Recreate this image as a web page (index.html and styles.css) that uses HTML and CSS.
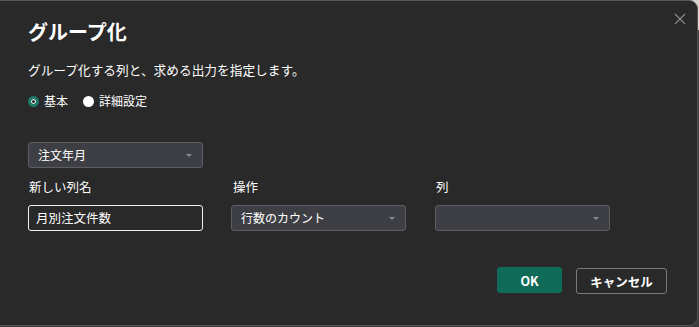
FILE: index.html
```html
<!DOCTYPE html>
<html lang="ja">
<head>
    <meta charset="UTF-8">
    <title>グループ化</title>
    <link rel="stylesheet" href="styles.css">
</head>
<body>
    <div class="dialog">
        <button class="close-btn" aria-label="閉じる">
            <svg width="12" height="12" viewBox="0 0 12 12"><path d="M1 1L11 11M11 1L1 11" stroke="#8a8a8a" stroke-width="1.2" fill="none"/></svg>
        </button>

        <h1 class="title">グループ化</h1>
        <p class="desc">グループ化する列と、求める出力を指定します。</p>

        <div class="radio-row">
            <label class="radio"><span class="dot checked"></span>基本</label>
            <label class="radio"><span class="dot"></span>詳細設定</label>
        </div>

        <div class="select group-col">注文年月<span class="caret"></span></div>

        <div class="fields">
            <div class="field">
                <div class="label">新しい列名</div>
                <div class="text-input">月別注文件数</div>
            </div>
            <div class="field">
                <div class="label">操作</div>
                <div class="select">行数のカウント<span class="caret"></span></div>
            </div>
            <div class="field">
                <div class="label">列</div>
                <div class="select"><span class="caret"></span></div>
            </div>
        </div>

        <div class="actions">
            <button class="btn primary">OK</button>
            <button class="btn secondary">キャンセル</button>
        </div>
    </div>
</body>
</html>
```

FILE: styles.css
```css
* {
    margin: 0;
    padding: 0;
    box-sizing: border-box;
}

body {
    font-family: 'Noto Sans CJK JP', 'Noto Sans', sans-serif;
    background: linear-gradient(#d6d2cc 0, #d6d2cc 30px, #3a3a3a 30px);
    height: 327px;
    overflow: hidden;
}

.dialog {
    position: relative;
    width: 708px;
    height: 326px;
    margin-left: -10px;
    background: #292929;
    border: 1px solid #555;
    border-radius: 9px;
    padding: 16px 0 0 37px;
    color: #fff;
}

.close-btn {
    position: absolute;
    top: 8px;
    right: 7px;
    width: 20px;
    height: 20px;
    background: none;
    border: none;
    display: flex;
    align-items: center;
    justify-content: center;
}

.title {
    font-size: 20px;
    font-weight: 700;
    line-height: 30px;
}

.desc {
    font-size: 12.7px;
    line-height: 18px;
    margin-top: 14px;
}

.radio-row {
    display: flex;
    gap: 15px;
    margin-top: 13px;
    font-size: 12px;
    line-height: 18px;
}

.radio {
    display: flex;
    align-items: center;
    gap: 5px;
}

.dot {
    width: 11px;
    height: 11px;
    border-radius: 50%;
    background: #fff;
}

.dot.checked {
    background: #292929;
    border: 3px solid #1f7a68;
    box-shadow: inset 0 0 0 1px #fff;
}

.select {
    position: relative;
    width: 175px;
    height: 26px;
    background: #3e3f44;
    border: 1px solid #5d5e63;
    border-radius: 3px;
    font-size: 12px;
    line-height: 24px;
    padding-left: 9px;
}

.caret {
    position: absolute;
    right: 10px;
    top: 11px;
    border-left: 3px solid transparent;
    border-right: 3px solid transparent;
    border-top: 3px solid #8a8b90;
}

.group-col {
    margin-top: 32px;
}

.fields {
    display: flex;
    gap: 28px;
    margin-top: 10px;
}

.field:nth-child(3) {
    margin-left: 1px;
}

.label {
    font-size: 12.5px;
    line-height: 18px;
    margin-bottom: 9px;
    padding-left: 1px;
}

.field:nth-child(2) .label {
    padding-left: 2px;
}

.text-input {
    width: 175px;
    height: 26px;
    border: 1px solid #f0f0f0;
    border-radius: 3px;
    font-size: 12.5px;
    line-height: 24px;
    padding-left: 7px;
}

.actions {
    display: flex;
    justify-content: flex-end;
    gap: 14px;
    margin-top: 36px;
    padding-right: 30px;
}

.btn {
    height: 26px;
    border-radius: 3px;
    font-family: 'Noto Sans CJK JP', sans-serif;
    font-size: 12.5px;
    font-weight: 700;
    color: #fff;
}

.primary {
    width: 65px;
    background: #0f6b58;
    border: none;
}

.secondary {
    width: 91px;
    background: #292929;
    border: 1px solid #7a7a7a;
    margin-top: 1px;
}
```
